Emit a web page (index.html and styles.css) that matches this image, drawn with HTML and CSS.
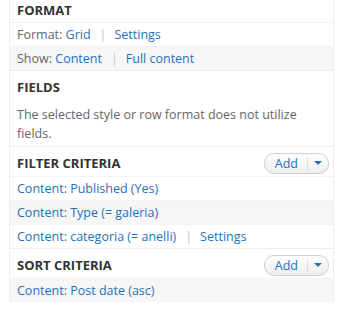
FILE: index.html
```html
<!DOCTYPE html>
<html lang="en">
<head>
    <meta charset="UTF-8">
    <title>Views settings</title>
    <link rel="stylesheet" href="styles.css">
</head>
<body>
    <div class="views-column">
        <div class="views-section first">
            <h3 class="section-title">Format</h3>
            <div class="row">Format: <a href="#">Grid</a><span class="sep">|</span><a href="#">Settings</a></div>
            <div class="row odd">Show: <a href="#">Content</a><span class="sep">|</span><a href="#">Full content</a></div>
        </div>

        <div class="views-section">
            <h3 class="section-title">Fields</h3>
            <p class="note">The selected style or row format does not utilize fields.</p>
        </div>

        <div class="views-section">
            <div class="section-head">
                <h3 class="section-title">Filter criteria</h3>
                <div class="add-btn"><span class="add-label">Add</span><span class="add-drop"></span></div>
            </div>
            <div class="row"><a href="#">Content: Published (Yes)</a></div>
            <div class="row odd"><a href="#">Content: Type (= galeria)</a></div>
            <div class="row"><a href="#">Content: categoria (= anelli)</a><span class="sep">|</span><a href="#">Settings</a></div>
        </div>

        <div class="views-section last">
            <div class="section-head">
                <h3 class="section-title">Sort criteria</h3>
                <div class="add-btn"><span class="add-label">Add</span><span class="add-drop"></span></div>
            </div>
            <div class="row odd"><a href="#">Content: Post date (asc)</a></div>
        </div>
    </div>
</body>
</html>
```

FILE: styles.css
```css
body {
    margin: 0;
    background: #fff;
    font-family: "Open Sans", "DejaVu Sans", sans-serif;
    font-size: 12.5px;
    color: #666;
}

a {
    color: #1f72b8;
    text-decoration: none;
}

.views-column {
    width: 323px;
    margin-left: 9px;
    border-left: 1px solid #eee;
    border-right: 1px solid #eee;
}

.views-section {
    border-bottom: 1px solid #eee;
}

.views-section.last {
    border-bottom: none;
}

.section-title {
    margin: 0;
    padding: 7px 7px 4px;
    font-size: 13px;
    line-height: 18px;
    font-weight: bold;
    text-transform: uppercase;
    color: #333;
}

.views-section.first .section-title {
    padding-top: 1px;
    padding-bottom: 3px;
}

.section-head {
    display: flex;
    justify-content: space-between;
    align-items: center;
}

.row {
    height: 23px;
    line-height: 23px;
    padding: 0 7px;
    border-top: 1px solid #f2f2f2;
}

.row.odd {
    background: #f6f6f6;
}

.sep {
    color: #c4c4c4;
    margin: 0 8px 0 9px;
}

.note {
    margin: 0;
    padding: 5px 7px 3px;
    line-height: 19px;
}

.add-btn {
    display: flex;
    align-items: center;
    margin: 3px 4px 0 0;
    height: 19px;
    border: 1px solid #cfcfcf;
    border-radius: 10px;
    background: linear-gradient(#fff, #ededed);
}

.add-label {
    padding: 0 9px 0 10px;
    color: #1f72b8;
    font-size: 12.5px;
    line-height: 13px;
    border-right: 1px solid #ddd;
}

.add-drop {
    width: 0;
    height: 0;
    margin: 0 6px;
    border-left: 4px solid transparent;
    border-right: 4px solid transparent;
    border-top: 4px solid #1f72b8;
}
```
